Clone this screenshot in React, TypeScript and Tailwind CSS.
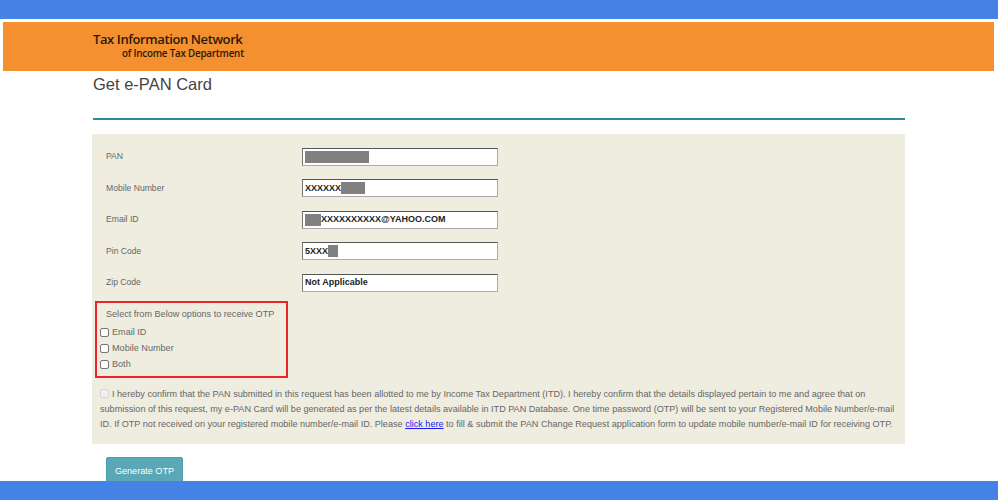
const fields = [
  { label: 'PAN', kind: 'pan' },
  { label: 'Mobile Number', kind: 'mobile' },
  { label: 'Email ID', kind: 'email' },
  { label: 'Pin Code', kind: 'pin' },
  { label: 'Zip Code', kind: 'zip' },
];

function Redact({ w }: { w: string }) {
  return <span className={`inline-block h-[12px] bg-[#808080] ${w}`} />;
}

function FieldValue({ kind }: { kind: string }) {
  if (kind === 'pan') return <Redact w="w-[64px]" />;
  if (kind === 'mobile')
    return (
      <>
        <span>XXXXXX</span>
        <Redact w="w-[24px]" />
      </>
    );
  if (kind === 'email')
    return (
      <>
        <Redact w="w-[16px]" />
        <span>XXXXXXXXXX@YAHOO.COM</span>
      </>
    );
  if (kind === 'pin')
    return (
      <>
        <span>5XXX</span>
        <Redact w="w-[10px]" />
      </>
    );
  return <span>Not Applicable</span>;
}

function Box({ disabled }: { disabled?: boolean }) {
  return (
    <span
      className={`inline-block w-[9px] h-[9px] rounded-[2px] border ${
        disabled ? 'border-[#d6d6d6] bg-[#f0f0f0]' : 'border-[#767676] bg-white'
      }`}
    />
  );
}

export default function App() {
  return (
    <div className="relative w-[998px] h-[500px] overflow-hidden bg-white font-['Liberation_Sans',Arial,sans-serif]">
      <div className="h-[19px] bg-[#4482e6]" />
      <div className="h-[3px]" />
      <div className="ml-[3px] w-[991px] h-[49px] bg-[#f4902f] pl-[90px] pt-[11px] font-['Open_Sans',sans-serif] text-[#2b1a0a] leading-none">
        <div className="text-[13px] font-semibold tracking-[-0.4px]">Tax Information Network</div>
        <div className="ml-[29px] mt-[3px] text-[9.8px] font-semibold tracking-[-0.2px]">of Income Tax Department</div>
      </div>

      <div className="ml-[92px] w-[813px]">
        <h1 className="pl-[1px] pt-[3px] text-[16.5px] leading-[20px] text-[#444]">Get e-PAN Card</h1>
        <div className="mt-[24px] ml-[1px] h-[2px] bg-[#2a8b9d]" />

        <div className="mt-[14px] bg-[#efede0] pt-[13px] pb-[13px]">
          {fields.map((f) => (
            <div key={f.label} className="flex items-center h-[31.5px] pl-[14px]">
              <div className="w-[196px] text-[8.6px] text-[#666] -mt-[12px]">{f.label}</div>
              <div className="-mt-[12px] flex items-center w-[196px] h-[18px] bg-white border border-[#aaa] border-t-[#555] border-l-[#777] pl-[2px] text-[9px] font-bold text-[#222] leading-none">
                <FieldValue kind={f.kind} />
              </div>
            </div>
          ))}

          <div className="-mt-[4px] ml-[3px] w-[193px] h-[77px] border-2 border-[#e8262a] pt-[5px]">
            <div className="pl-[9px] text-[9.1px] leading-[13px] text-[#666]">Select from Below options to receive OTP</div>
            <div className="mt-[5px] flex flex-col gap-[3px] pl-[3px] text-[9.1px] text-[#666] leading-[13px]">
              {['Email ID', 'Mobile Number', 'Both'].map((o) => (
                <div key={o} className="flex items-center gap-[3px]">
                  <Box />
                  <span>{o}</span>
                </div>
              ))}
            </div>
          </div>

          <p className="mt-[9px] pl-[8px] pr-[10px] text-[9.1px] leading-[14.5px] text-[#666]">
            <span className="inline-block align-[-1px] mr-[3px]">
              <Box disabled />
            </span>
            I hereby confirm that the PAN submitted in this request has been allotted to me by Income Tax Department (ITD). I hereby confirm that the details displayed pertain to me and agree that on submission of this request, my e-PAN Card will be generated as per the latest details available in ITD PAN Database. One time password (OTP) will be sent to your Registered Mobile Number/e-mail ID. If OTP not received on your registered mobile number/e-mail ID. Please{' '}
            <a className="text-[#1a1aee] underline">click here</a> to fill &amp; submit the PAN Change Request application form to update mobile number/e-mail ID for receiving OTP.
          </p>
        </div>

        <button className="mt-[13px] ml-[14px] w-[77px] h-[28px] rounded-[2px] bg-[#5aa7b6] border border-[#4e9bab] text-white text-[9.1px] leading-[24px] align-top">
          Generate OTP
        </button>
      </div>

      <div className="absolute left-0 bottom-0 w-full h-[19px] bg-[#4482e6]" />
    </div>
  );
}
